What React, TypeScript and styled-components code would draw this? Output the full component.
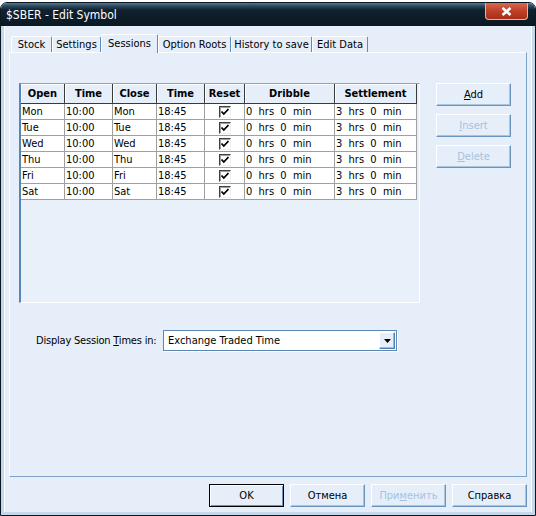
import React, { FC } from 'react';
import styled, { createGlobalStyle } from 'styled-components';

const FONT = `"DejaVu Sans Condensed", "Liberation Sans", Arial, sans-serif`;

const GlobalStyle = createGlobalStyle`
  html, body {
    margin: 0;
    padding: 0;
    background: #ffffff;
  }
  body {
    font-family: ${FONT};
    font-size: 11px;
    color: #000;
  }
  * {
    box-sizing: border-box;
  }
`;

const Page = styled.div`
  width: 536px;
  height: 516px;
  padding-top: 2px;
  overflow: hidden;
`;

const Window = styled.div`
  height: 514px;
  display: flex;
  flex-direction: column;
  border: 1px solid #0b1722;
  border-radius: 7px 7px 0 0;
  overflow: hidden;
  background: #e5eef9;
`;

const TitleBar = styled.div`
  flex: none;
  height: 23px;
  display: flex;
  align-items: flex-start;
  justify-content: space-between;
  padding-left: 5px;
  background: linear-gradient(to bottom, #55788f 0px, #2d4a5e 3px, #10222f 7px, #0a1821 100%);
`;

const Title = styled.span`
  color: #ffffff;
  font-size: 12px;
  line-height: 24px;
`;

const CloseButton = styled.div`
  width: 43px;
  height: 17px;
  margin-right: 7px;
  border: 1px solid #e9b3a6;
  border-top: none;
  border-radius: 0 0 4px 4px;
  background: linear-gradient(to bottom, #d86a50 0%, #c0432a 45%, #a82e17 100%);
  display: flex;
  align-items: center;
  justify-content: center;
`;

const Client = styled.div`
  flex: 1;
  display: flex;
  flex-direction: column;
  padding: 0 5px 5px 5px;
  border: 3px solid #c6d8ec;
  border-top: none;
  box-shadow: inset 1px 0 0 #ffffff, inset -1px 0 0 #ffffff;
`;

const TabStrip = styled.div`
  flex: none;
  height: 26px;
  display: flex;
  align-items: flex-end;
  padding-left: 2px;
`;

const Tab = styled.div<{ $active?: boolean; $w: number }>`
  position: relative;
  z-index: ${(p) => (p.$active ? 1 : 0)};
  width: ${(p) => p.$w}px;
  height: ${(p) => (p.$active ? 19 : 16)}px;
  margin-bottom: ${(p) => (p.$active ? -1 : 0)}px;
  display: flex;
  align-items: center;
  justify-content: center;
  padding-bottom: ${(p) => (p.$active ? 2 : 0)}px;
  background: #e5eef9;
  border: 1px solid;
  border-bottom: none;
  border-color: #ffffff #5b8cbc #ffffff #ffffff;
  border-radius: 2px 2px 0 0;
  white-space: nowrap;
`;

const Panel = styled.div`
  flex: none;
  height: 425px;
  display: flex;
  flex-direction: column;
  padding: 30px 0 0 9px;
  border: 1px solid;
  border-color: #fbfdff #7ea3c8 #7ea3c8 #fbfdff;
`;

const ContentRow = styled.div`
  display: flex;
  align-items: flex-start;
  gap: 16px;
`;

const GridBox = styled.div`
  width: 401px;
  height: 220px;
  background: #e8f0fa;
  border-left: 2px solid #5686b6;
  border-top: 1px solid #a0a0a0;
  border-right: 1px solid #fbfdff;
  border-bottom: 1px solid #fbfdff;
`;

const Table = styled.div`
  display: grid;
  grid-template-columns: 44px 48px 44px 48px 40px 90px 82px;
  grid-auto-rows: 16px;
  grid-template-rows: 20px;
`;

const HeadCell = styled.div`
  display: flex;
  align-items: center;
  justify-content: center;
  font-weight: bold;
  background: #e5eef9;
  border-right: 1px solid #3a3a3a;
  border-bottom: 1px solid #3a3a3a;
  box-shadow: inset 1px 1px 0 #ffffff;
`;

const Cell = styled.div<{ $center?: boolean }>`
  display: flex;
  align-items: center;
  justify-content: ${(p) => (p.$center ? 'center' : 'flex-start')};
  padding-left: ${(p) => (p.$center ? 0 : 1)}px;
  background: #ffffff;
  border-right: 1px solid #a0a0a0;
  border-bottom: 1px solid #a0a0a0;
  white-space: pre;
`;

const CheckBox = styled.div`
  width: 12px;
  height: 12px;
  margin-top: 1px;
  background: #ffffff;
  border: 1px solid;
  border-color: #404040 #f0f0f0 #f0f0f0 #404040;
  box-shadow: inset 1px 1px 0 #a0a0a0;
  display: flex;
  align-items: center;
  justify-content: center;
`;

const ButtonCol = styled.div`
  display: flex;
  flex-direction: column;
  gap: 8px;
`;

const Button = styled.div<{ $disabled?: boolean; $default?: boolean }>`
  width: 75px;
  height: 23px;
  display: flex;
  align-items: center;
  justify-content: center;
  color: ${(p) => (p.$disabled ? '#a5c3e0' : '#000000')};
  background: #e5eef9;
  border: 1px solid;
  border-color: ${(p) => (p.$default ? '#000000' : '#ffffff #6a95c0 #6a95c0 #ffffff')};
  box-shadow: ${(p) =>
    p.$default ? 'inset 1px 1px 0 #ffffff, inset -1px -1px 0 #6a95c0' : 'inset -1px -1px 0 #a9c4df'};
`;

const ComboRow = styled.div`
  display: flex;
  align-items: center;
  margin-top: 27px;
  padding-left: 17px;
`;

const Label = styled.span`
  width: 127px;
  letter-spacing: -0.2px;
`;

const Combo = styled.div`
  width: 234px;
  height: 21px;
  display: flex;
  align-items: center;
  justify-content: space-between;
  padding: 1px 1px 1px 4px;
  background: #ffffff;
  border: 1px solid #5a89b8;
  box-shadow: 1px 1px 0 #ffffff;
`;

const DropButton = styled.div`
  width: 16px;
  height: 17px;
  display: flex;
  align-items: center;
  justify-content: center;
  background: #e5eef9;
  border: 1px solid;
  border-color: #ffffff #4f7fae #4f7fae #ffffff;
  box-shadow: inset -1px -1px 0 #9dbad8;
`;

const Footer = styled.div`
  display: flex;
  justify-content: flex-end;
  gap: 6px;
  margin-top: 7px;
`;

const tabs = [
  { label: 'Stock', w: 41 },
  { label: 'Settings', w: 49 },
  { label: 'Sessions', w: 57, active: true },
  { label: 'Option Roots', w: 73 },
  { label: 'History to save', w: 81 },
  { label: 'Edit Data', w: 56 },
];

const headers = ['Open', 'Time', 'Close', 'Time', 'Reset', 'Dribble', 'Settlement'];
const days = ['Mon', 'Tue', 'Wed', 'Thu', 'Fri', 'Sat'];

const Check: FC = () => (
  <svg width="10" height="10" viewBox="0 0 10 10">
    <polyline points="1.5,4.5 3.8,7 8.5,2" fill="none" stroke="#000" strokeWidth="1.8" />
  </svg>
);

const App: FC = () => (
  <Page>
    <GlobalStyle />
    <Window>
      <TitleBar>
        <Title>$SBER - Edit Symbol</Title>
        <CloseButton>
          <svg width="11" height="9" viewBox="0 0 11 9">
            <path d="M1.5 1 L9.5 8 M9.5 1 L1.5 8" stroke="#fff" strokeWidth="2.6" />
          </svg>
        </CloseButton>
      </TitleBar>
      <Client>
        <TabStrip>
          {tabs.map((t) => (
            <Tab key={t.label} $w={t.w} $active={t.active}>
              {t.label}
            </Tab>
          ))}
        </TabStrip>
        <Panel>
          <ContentRow>
            <GridBox>
              <Table>
                {headers.map((h, i) => (
                  <HeadCell key={`h${i}`}>{h}</HeadCell>
                ))}
                {days.map((d) => (
                  <React.Fragment key={d}>
                    <Cell>{d}</Cell>
                    <Cell>10:00</Cell>
                    <Cell>{d}</Cell>
                    <Cell>18:45</Cell>
                    <Cell $center>
                      <CheckBox>
                        <Check />
                      </CheckBox>
                    </Cell>
                    <Cell>{'0  hrs  0  min'}</Cell>
                    <Cell>{'3  hrs  0  min'}</Cell>
                  </React.Fragment>
                ))}
              </Table>
            </GridBox>
            <ButtonCol>
              <Button>
                <span>
                  <u>A</u>dd
                </span>
              </Button>
              <Button $disabled>
                <span>
                  <u>I</u>nsert
                </span>
              </Button>
              <Button $disabled>
                <span>
                  <u>D</u>elete
                </span>
              </Button>
            </ButtonCol>
          </ContentRow>
          <ComboRow>
            <Label>
              Display Session <u>T</u>imes in:
            </Label>
            <Combo>
              <span>Exchange Traded Time</span>
              <DropButton>
                <svg width="7" height="4" viewBox="0 0 7 4">
                  <polygon points="0,0 7,0 3.5,4" fill="#000" />
                </svg>
              </DropButton>
            </Combo>
          </ComboRow>
        </Panel>
        <Footer>
          <Button $default>OK</Button>
          <Button>Отмена</Button>
          <Button $disabled>
            <span>
              При<u>м</u>енить
            </span>
          </Button>
          <Button>Справка</Button>
        </Footer>
      </Client>
    </Window>
  </Page>
);

export default App;
